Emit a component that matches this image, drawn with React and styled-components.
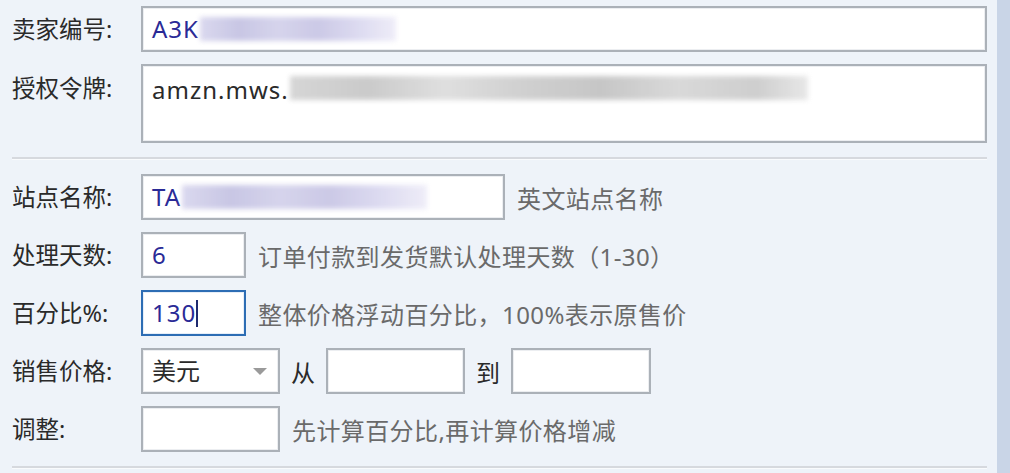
import styled, { createGlobalStyle } from "styled-components"

const Global = createGlobalStyle`
  html, body {
    margin: 0;
    padding: 0;
    background: #eef3f9;
  }
  body {
    font-family: "Noto Sans", "Noto Sans CJK SC", sans-serif;
  }
`

const Window = styled.div`
  display: flex;
  width: 1010px;
  height: 473px;
  overflow: hidden;
  background: #eef3f9;
`

const Form = styled.div`
  flex: 1;
  display: flex;
  flex-direction: column;
  gap: 12px;
  padding: 6px 10px 0 12px;
`

const Strip = styled.div`
  width: 13px;
  background: #c9d5e7;
`

const Row = styled.div`
  display: flex;
  align-items: ${p => (p.$top ? "flex-start" : "center")};
  gap: 12px;
`

const Label = styled.div`
  width: 117px;
  flex: none;
  font-size: 23.5px;
  color: #2a2a2a;
  white-space: nowrap;
  padding-top: ${p => (p.$top ? "10px" : "0")};
  line-height: 28px;
`

const Box = styled.div`
  box-sizing: border-box;
  height: ${p => p.$h || 46}px;
  width: ${p => (p.$w ? p.$w + "px" : "auto")};
  flex: ${p => (p.$w ? "none" : "1")};
  background: #fff;
  border: 2px solid ${p => (p.$focus ? "#2d6db4" : "#abb1b8")};
  box-shadow: inset 0 0 0 1px ${p => (p.$focus ? "#e6eef8" : "#eceef1")};
  display: flex;
  align-items: ${p => (p.$top ? "flex-start" : "center")};
  padding: ${p => (p.$top ? "10px 9px" : "0 9px")};
  font-size: 24px;
  letter-spacing: 1px;
  line-height: 28px;
  color: ${p => (p.$dark ? "#2a2a2a" : "#2a2a96")};
  white-space: nowrap;
  overflow: hidden;
`

const Blur = styled.span`
  display: inline-block;
  width: ${p => p.$w}px;
  height: 24px;
  margin-left: 1px;
  background: ${p => p.$bg};
  filter: blur(2.5px);
  opacity: 0.85;
`

const Caret = styled.span`
  display: inline-block;
  width: 2px;
  height: 27px;
  background: #1e2a6e;
`

const Hint = styled.span`
  font-size: 24px;
  letter-spacing: 0.4px;
  color: #6a6a6a;
  white-space: nowrap;
`

const Word = styled.span`
  font-size: 24px;
  color: #2a2a2a;
  margin: 0 -1px 0 -1px;
`

const Select = styled(Box)`
  justify-content: space-between;
  color: #2a2a2a;
  letter-spacing: 0;
`

const Arrow = styled.span`
  width: 0;
  height: 0;
  border-left: 7px solid transparent;
  border-right: 7px solid transparent;
  border-top: 7px solid #9a9a9a;
  margin-right: 2px;
`

const Divider = styled.div`
  height: 2px;
  background: #d6d9de;
  border-bottom: 1px solid #f9fbfd;
  margin: 2px 0;
`

const lavender =
  "linear-gradient(90deg, #d4d2ec, #bfbde0 20%, #cfcde9 40%, #c3c0e2 60%, #d6d4ee 80%, #eceaf7)"
const grey =
  "linear-gradient(90deg, #cfcfcf, #c2c2c2 15%, #dadada 30%, #c8c8c8 45%, #bdbdbd 60%, #d3d3d3 75%, #c6c6c6 90%, #e4e4e4)"

export default function App() {
  return (
    <>
      <Global />
      <Window>
        <Form>
          <Row>
            <Label>卖家编号:</Label>
            <Box>A3K<Blur $w={196} $bg={lavender} /></Box>
          </Row>
          <Row $top>
            <Label $top>授权令牌:</Label>
            <Box $h={79} $top $dark>amzn.mws.<Blur $w={518} $bg={grey} /></Box>
          </Row>
          <Divider />
          <Row>
            <Label>站点名称:</Label>
            <Box $w={364}>TA<Blur $w={245} $bg={lavender} /></Box>
            <Hint>英文站点名称</Hint>
          </Row>
          <Row>
            <Label>处理天数:</Label>
            <Box $w={105}>6</Box>
            <Hint>订单付款到发货默认处理天数（1-30）</Hint>
          </Row>
          <Row>
            <Label>百分比%:</Label>
            <Box $w={105} $focus>130<Caret /></Box>
            <Hint>整体价格浮动百分比，100%表示原售价</Hint>
          </Row>
          <Row>
            <Label>销售价格:</Label>
            <Select $w={139}>美元<Arrow /></Select>
            <Word>从</Word>
            <Box $w={139} />
            <Word>到</Word>
            <Box $w={140} />
          </Row>
          <Row>
            <Label>调整:</Label>
            <Box $w={139} />
            <Hint>先计算百分比,再计算价格增减</Hint>
          </Row>
          <Divider />
        </Form>
        <Strip />
      </Window>
    </>
  )
}
